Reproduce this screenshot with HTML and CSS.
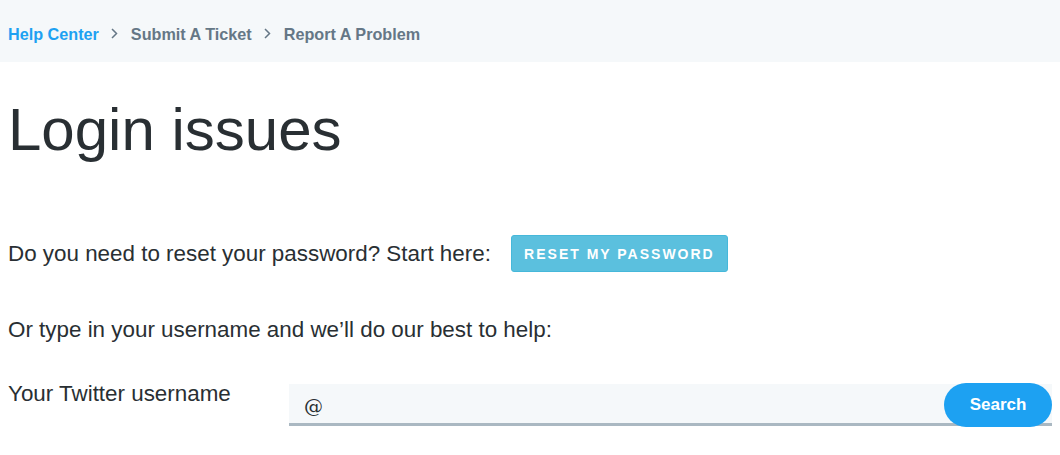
FILE: index.html
```html
<!DOCTYPE html>
<html lang="en">

<head>
    <meta charset="UTF-8">
    <title>Login issues</title>
    <link rel="stylesheet" href="styles.css">
</head>

<body>

    <nav class="breadcrumbs">
        <a class="crumb crumb-home" href="#">Help Center</a>
        <svg class="sep" width="7" height="11" viewBox="0 0 7 11"><path d="M1 1l4.5 4.5L1 10" fill="none" stroke="#657786" stroke-width="1.5"/></svg>
        <a class="crumb" href="#">Submit A Ticket</a>
        <svg class="sep" width="7" height="11" viewBox="0 0 7 11"><path d="M1 1l4.5 4.5L1 10" fill="none" stroke="#657786" stroke-width="1.5"/></svg>
        <span class="crumb">Report A Problem</span>
    </nav>

    <main class="content">
        <h1 class="title">Login issues</h1>

        <div class="row reset-row">
            <p class="text">Do you need to reset your password? Start here:</p>
            <button class="reset-btn">Reset my password</button>
        </div>

        <p class="text help-text">Or type in your username and we’ll do our best to help:</p>

        <form class="row user-row">
            <label class="text user-label" for="username">Your Twitter username</label>
            <div class="search-box">
                <input id="username" class="user-input" type="text" value="@">
                <button type="button" class="search-btn">Search</button>
            </div>
        </form>
    </main>

</body>

</html>
```

FILE: styles.css
```css
body {
    margin: 0;
    font-family: "Liberation Sans", Arial, sans-serif;
    color: #292f33;
    background-color: #fff;
}

.breadcrumbs {
    display: flex;
    align-items: center;
    height: 62px;
    padding: 6px 8px 0;
    box-sizing: border-box;
    background-color: #f5f8fa;
    font-size: 16.2px;
    font-weight: bold;
}

.crumb {
    color: #657786;
    text-decoration: none;
}

.crumb-home {
    color: #1da1f2;
}

.sep {
    margin: -2px 13px 0 12px;
}

.content {
    padding: 0 8px;
}

.title {
    margin: 38px 0 0;
    font-size: 60px;
    font-weight: normal;
    line-height: 60px;
}

.row {
    display: flex;
    align-items: center;
}

.text {
    margin: 0;
    font-size: 22.4px;
    line-height: 26px;
}

.reset-row {
    margin-top: 75px;
}

.reset-btn {
    margin-left: 20px;
    padding: 0 12px;
    height: 37px;
    width: 217px;
    background-color: #5bc0de;
    border: 1px solid #46b8da;
    border-radius: 3px;
    color: #fff;
    font-family: inherit;
    font-size: 14px;
    font-weight: bold;
    letter-spacing: 2px;
    text-transform: uppercase;
}

.help-text {
    margin-top: 45px;
}

.user-row {
    margin-top: 38px;
    align-items: flex-start;
}

.user-label {
    width: 281px;
}

.search-box {
    display: flex;
    flex: 1;
    align-items: center;
    margin-top: 2px;
}

.user-input {
    flex: 1;
    height: 42px;
    box-sizing: border-box;
    padding: 4px 15px 0;
    border: none;
    border-bottom: 3px solid #aab8c2;
    background-color: #f5f8fa;
    font-family: "DejaVu Serif", serif;
    font-size: 19px;
    color: #292f33;
    outline: none;
}

.search-btn {
    margin-left: -108px;
    width: 108px;
    height: 44px;
    border: none;
    border-radius: 22px;
    background-color: #1da1f2;
    color: #fff;
    font-family: inherit;
    font-size: 17px;
    font-weight: bold;
}
```
